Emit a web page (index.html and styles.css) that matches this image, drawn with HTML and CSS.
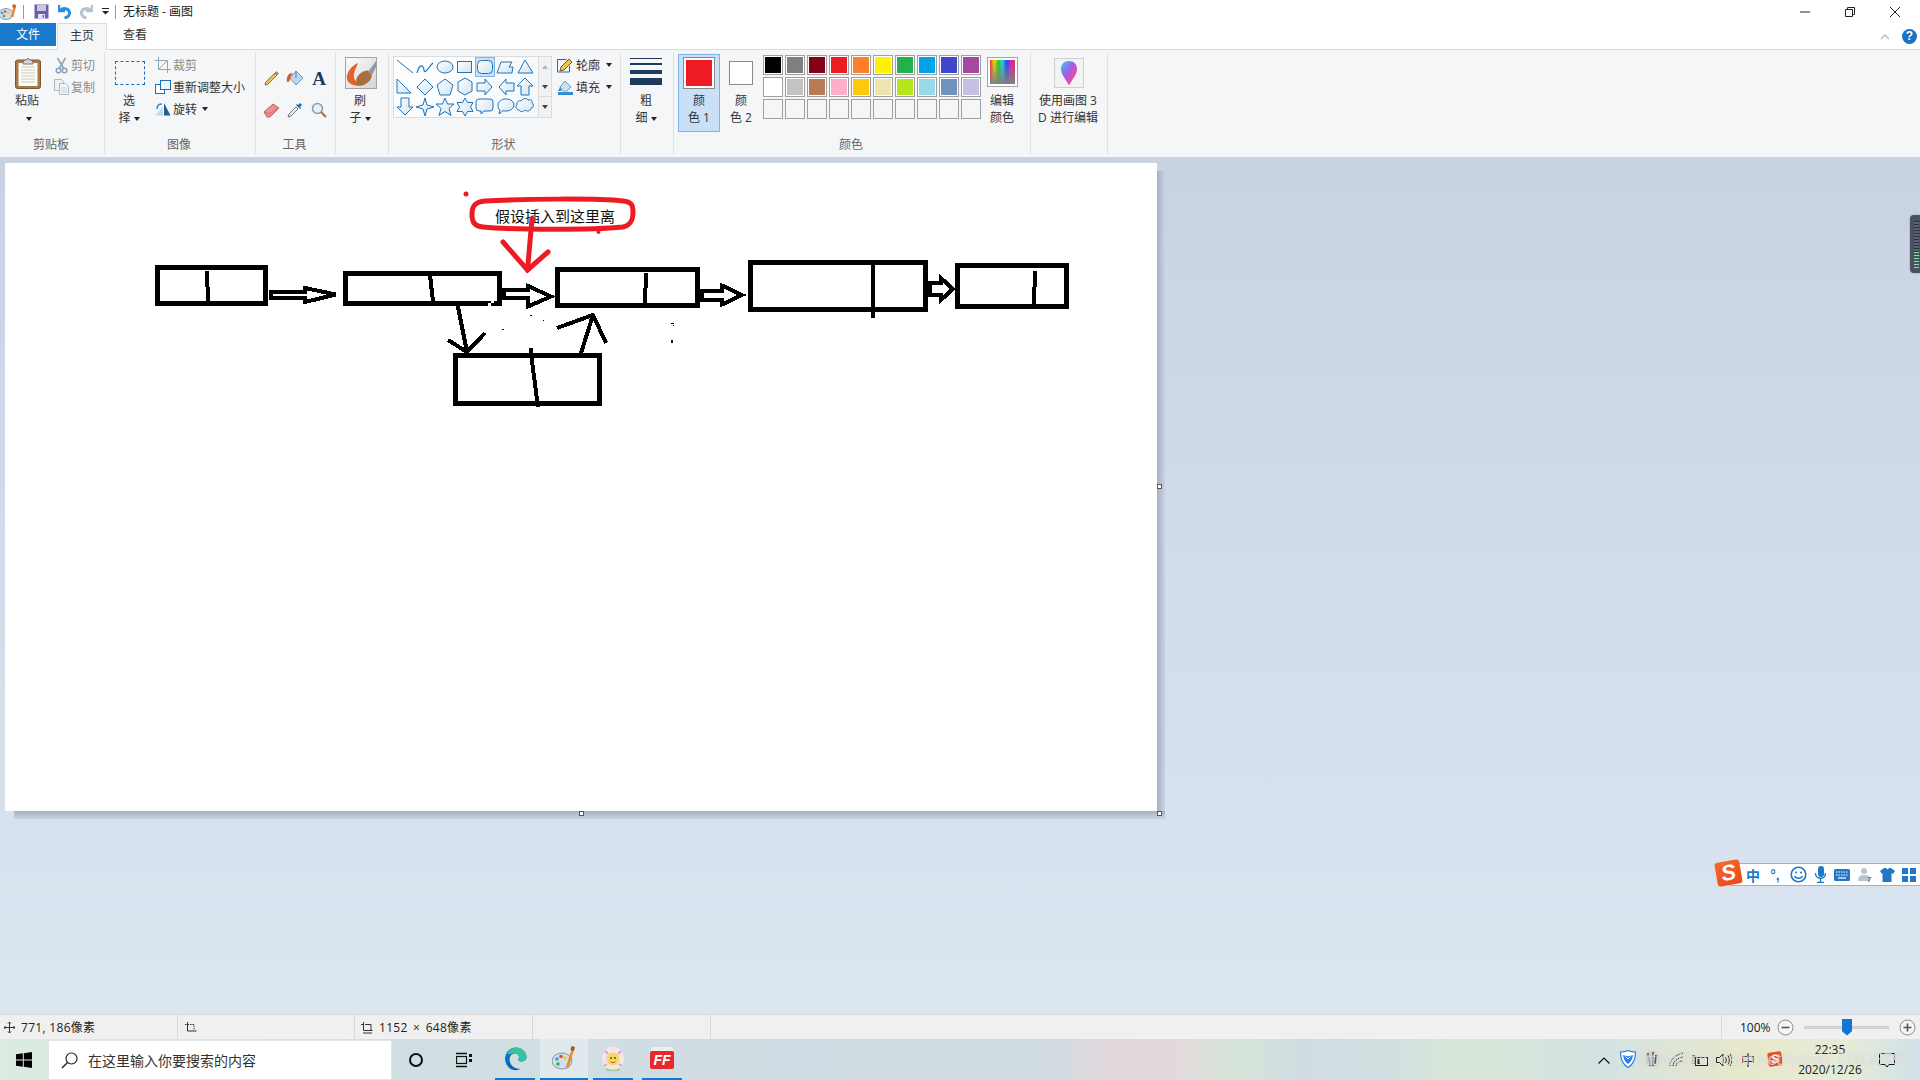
FILE: index.html
```html
<!DOCTYPE html>
<html lang="zh-CN">
<head>
	<meta charset="UTF-8">
	<title>无标题 - 画图</title>
	<link rel="stylesheet" href="styles.css">
</head>
<body>
<div class="app">

	<!-- 标题栏 -->
	<header class="titlebar">
		<svg class="qa qa-app" width="17" height="18" viewBox="0 0 17 18"><ellipse cx="6" cy="11" rx="7" ry="5.5" fill="#cfe0ea" stroke="#7d9cb5"/><circle cx="2" cy="10" r="1.3" fill="#3a9be0"/><circle cx="5" cy="8.5" r="1.3" fill="#e04a3a"/><circle cx="8" cy="9.5" r="1.3" fill="#f2c230"/><circle cx="4" cy="13" r="1.3" fill="#49a84a"/><path d="M15 3l-3 11" stroke="#e8892b" stroke-width="2.5"/><path d="M13 1l3 1-1 3-3-1z" fill="#b5682a"/></svg>
		<i class="qa-sep"></i>
		<svg class="qa qa-save" width="15" height="15" viewBox="0 0 15 15"><path d="M0.5 0.5h14v14h-14z" fill="#6a5ea8"/><path d="M3 1h9v6H3z" fill="#c9c6e2"/><path d="M4 10h7v4.5H4z" fill="#e3e2ef"/><path d="M8.500 11h1.500v2.500H8.500z" fill="#6a5ea8"/></svg>
		<svg class="qa qa-undo" width="14" height="15" viewBox="0 0 14 15"><path d="M1 1v6h6" fill="none" stroke="#2a8fd8" stroke-width="2.500"/><path d="M2 6.500c3-3 9-2.500 9.500 2 .3 3-2 5-5 5.500" fill="none" stroke="#2a8fd8" stroke-width="3"/></svg>
		<svg class="qa qa-redo" width="14" height="15" viewBox="0 0 14 15"><path d="M13 1v6H7" fill="none" stroke="#b4c4d2" stroke-width="2.500"/><path d="M12 6.500c-3-3-9-2.500-9.500 2-.3 3 2 5 5 5.500" fill="none" stroke="#b4c4d2" stroke-width="3"/></svg>
		<svg class="qa qa-more" width="7" height="7" viewBox="0 0 7 7"><path d="M0 0h7v1H0zM0 3h7L3.500 6.500z" fill="#222"/></svg>
		<i class="qa-sep qa-sep2"></i>
		<span class="title-text">无标题 - 画图</span>
		<div class="winbtns">
			<svg width="12" height="12" viewBox="0 0 12 12"><path d="M1 6h10" stroke="#222"/></svg>
			<svg width="12" height="12" viewBox="0 0 12 12"><path d="M1.500 3.500h7v7h-7zM3.500 3.500v-2h7v7h-2" fill="none" stroke="#222"/></svg>
			<svg width="12" height="12" viewBox="0 0 12 12"><path d="M1 1l10 10M11 1L1 11" stroke="#222"/></svg>
		</div>
	</header>

	<!-- 选项卡 -->
	<nav class="tabs">
		<div class="tab tab-file">文件</div>
		<div class="tab tab-home">主页</div>
		<div class="tab tab-view">查看</div>
		<div class="tabs-right">
			<svg width="10" height="7" viewBox="0 0 10 7"><path d="M1 6l4-4 4 4" fill="none" stroke="#b9b9b9" stroke-width="1.300"/></svg>
			<span class="help">?</span>
		</div>
	</nav>

	<!-- 功能区 -->
	<section class="ribbon">
		<div class="group g-clip">
			<div class="group-body">
				<div class="big paste-btn">
					<div class="big-icon">
						<svg width="26" height="32" viewBox="0 0 26 32"><rect x="0.500" y="3" width="25" height="28.500" rx="2" fill="#a9794a" stroke="#7c5730"/><rect x="3.500" y="6" width="19" height="23" fill="#fdfdf8"/><path d="M6 10h14M6 13h14M6 16h14M6 19h14M6 22h14M6 25h14" stroke="#c9c9b8"/><path d="M8 5l2-2h1.500l1.500-2 1.500 2H16l2 2v2H8z" fill="#d5d5d5" stroke="#777"/></svg>
					</div>
					<div class="big-text">粘贴</div>
					<div class="big-text"><i class="caret"></i></div>
				</div>
				<div class="smalls">
					<div class="small off"><svg width="12" height="17" viewBox="0 0 12 17"><path d="M2 1l6 10M10 1L4 11" stroke="#8aa0b4" stroke-width="1.500"/><circle cx="3" cy="13.500" r="2.300" fill="none" stroke="#8aa0b4" stroke-width="1.500"/><circle cx="9" cy="13.500" r="2.300" fill="none" stroke="#8aa0b4" stroke-width="1.500"/></svg><span>剪切</span></div>
					<div class="small off"><svg width="15" height="16" viewBox="0 0 15 16"><path d="M.5.500h7l2 2v9h-9z" fill="#eef2f6" stroke="#a9b8c6"/><path d="M5.500 4.500h6l3 3v8h-9z" fill="#f6f8fa" stroke="#a9b8c6"/><path d="M7 9h6M7 11h6M7 13h6" stroke="#c3ced8"/></svg><span>复制</span></div>
				</div>
			</div>
			<div class="group-label">剪贴板</div>
		</div>

		<div class="group g-image">
			<div class="group-body">
				<div class="big select-btn">
					<div class="big-icon"><div class="select-mark"></div></div>
					<div class="big-text">选</div>
					<div class="big-text">择<i class="caret"></i></div>
				</div>
				<div class="smalls">
					<div class="small off"><svg width="16" height="16" viewBox="0 0 16 16"><path d="M3.500 0v12.500H16M0 3.500h12.500V16" fill="none" stroke="#8fa4b8"/><path d="M4 12L12 4" stroke="#8fa4b8"/></svg><span>裁剪</span></div>
					<div class="small"><svg width="16" height="14" viewBox="0 0 16 14"><rect x="0.500" y="4.500" width="9" height="9" fill="#fff" stroke="#1f6db5"/><rect x="5.500" y="0.500" width="10" height="9" fill="#eef5fb" stroke="#1f6db5"/></svg><span>重新调整大小</span></div>
					<div class="small"><svg width="16" height="14" viewBox="0 0 16 14"><path d="M0 13.500L8 5v8.500z" fill="#c9d6e1"/><path d="M9 13.500V1l6.500 12.500z" fill="#1f5f96"/><path d="M2 7c0-4 2-5 5-5" fill="none" stroke="#2a8fd8" stroke-width="1.500"/></svg><span>旋转</span><i class="caret caret-r"></i></div>
				</div>
			</div>
			<div class="group-label">图像</div>
		</div>

		<div class="group g-tools">
			<div class="group-body tools-grid">
				<svg width="15" height="15" viewBox="0 0 15 15"><path d="M1 14l.8-3L11 2l2 2-9 9.200z" fill="#f3c24e" stroke="#5d5a4a" stroke-width=".8"/><path d="M11 2l1.500-1.500 2 2L13 4z" fill="#c9a06a" stroke="#5d5a4a" stroke-width=".6"/></svg>
				<svg width="18" height="17" viewBox="0 0 18 17"><path d="M10 1l7 7-7 7-6-7z" fill="#bcd8ee" stroke="#6d97bb"/><path d="M10 1v7" stroke="#4d7ea8"/><path d="M5 3c-3 1-5 5-4 9 2 0 3-1 3-3 0-2 1-4 3-5z" fill="#e2572b"/></svg>
				<span class="tool-a">A</span>
				<svg width="17" height="15" viewBox="0 0 17 15"><path d="M1 9l9-8 6 4-9 9H4z" fill="#f0908c" stroke="#b8605c"/><path d="M1 9l5 2 10-6" fill="none" stroke="#c9706c"/></svg>
				<svg width="16" height="16" viewBox="0 0 16 16"><path d="M1 15l1-3 7-7 2 2-7 7z" fill="#e8eef3" stroke="#6a7a88"/><path d="M9 3l4 4 1-1-1-1 2-2-2-2-2 2-1-1z" fill="#1f6db5"/></svg>
				<svg width="16" height="16" viewBox="0 0 16 16"><circle cx="6.500" cy="6.500" r="5" fill="#e6f0f8" stroke="#8a9aa8" stroke-width="1.500"/><path d="M10 10l5 5" stroke="#9a7a50" stroke-width="2.200"/></svg>
			</div>
			<div class="group-label">工具</div>
		</div>

		<div class="group g-brush">
			<div class="group-body">
				<div class="big brush-btn">
					<div class="big-icon">
						<svg class="brush-box" width="32" height="32" viewBox="0 0 32 32"><defs><linearGradient id="bb" x1="0" y1="0" x2="1" y2="1"><stop offset="0" stop-color="#fbfbfb"/><stop offset="1" stop-color="#d4d4d4"/></linearGradient></defs><rect x="0.500" y="0.500" width="31" height="31" fill="url(#bb)" stroke="#a3a3a3"/><path d="M13 6C6 9 1 16 2 22c1 6 10 8 18 6-8-1-12-5-11-11 1-5 3-8 4-11z" fill="#e4622a"/><ellipse cx="19" cy="21" rx="9" ry="6" transform="rotate(-40 19 21)" fill="#a5703e"/><path d="M23 15L31 4v6l-4 8z" fill="#8d99a6"/></svg>
					</div>
					<div class="big-text">刷</div>
					<div class="big-text">子<i class="caret"></i></div>
				</div>
			</div>
			<div class="group-label"></div>
		</div>

		<div class="group g-shapes">
			<div class="group-body">
				<div class="gallery">
					<svg class="gallery-svg" width="144" height="60" viewBox="0 0 144 60">
						<defs><linearGradient id="sf" x1="0" y1="0" x2="1" y2="1"><stop offset="0" stop-color="#ffffff"/><stop offset="1" stop-color="#cfe4f3"/></linearGradient></defs>
						<rect x="81.500" y="0.500" width="19" height="19" fill="#c9e0f7" stroke="#7eb4ea"/>
						<g fill="url(#sf)" stroke="#2272b5" stroke-width="1">
							<path d="M3 3l16 13" fill="none"/>
							<path d="M23 16c1-5 4-9 6-6s0 6 3 4 4-6 7-8" fill="none" stroke-width="1.200"/>
							<ellipse cx="51" cy="10" rx="8" ry="6"/>
							<rect x="63.500" y="4.500" width="14" height="11"/>
							<rect x="83.500" y="3.500" width="15" height="13" rx="4"/>
							<path d="M103 16l4-11h11l-3 5h4l-1 6z"/>
							<path d="M131 3l8 13h-15z"/>

							<path d="M3 22l14 14H3z"/>
							<path d="M31 22l8 8-8 8-8-8z"/>
							<path d="M51 22l8 6-3 10H46l-3-10z"/>
							<path d="M71 21l7 4v9l-7 4-7-4v-9z"/>
							<path d="M83 26h8v-4l7 8-7 8v-4h-8z"/>
							<path d="M120 26h-8v-4l-7 8 7 8v-4h8z"/>
							<path d="M131 21l8 8h-4v9h-8v-9h-4z"/>

							<path d="M7 41h8v9h4l-8 8-8-8h4z"/>
							<path d="M31 41l2 7 7 2-7 2-2 7-2-7-7-2 7-2z"/>
							<path d="M51 41l2.500 6h6.500l-5 4.500 2 7-6-4-6 4 2-7-5-4.500h6.500z"/>
							<path d="M71 41l2.500 4.500h5.500l-2.500 4.500 2.500 4.500h-5.500L71 59l-2.500-4.500H63l2.500-4.500-2.500-4.500h5.500z"/>
							<path d="M86 43h11a3 3 0 0 1 3 3v6a3 3 0 0 1-3 3h-6l-3 3v-3h-2a3 3 0 0 1-3-3v-6a3 3 0 0 1 3-3z" transform="translate(-1 -1)"/>
							<path d="M112 42c5 0 8 3 8 6s-3 6-8 6c-1 0-2 0-3-.3L105 57l1-4c-2-1-2-3-2-5 0-3 3-6 8-6z"/>
							<path d="M127 44c2-3 6-3 7-1 3-1 5 1 4 3 2 1 2 5-1 5 0 3-4 4-6 2-2 2-5 2-6 0-3 0-4-4-2-5-1-3 2-5 4-4z"/>
						</g>
					</svg>
					<div class="gallery-scroll">
						<i class="gs gs-up"></i>
						<i class="gs gs-down"></i>
						<i class="gs gs-more"></i>
					</div>
				</div>
				<div class="smalls shape-opts">
					<div class="small"><svg width="16" height="15" viewBox="0 0 16 15"><path d="M.5 1.500h9M.5 1.500v12.500h12V8" fill="none" stroke="#1f6db5"/><path d="M3 13l1-4 8-8 3 3-8 8z" fill="#f3c24e" stroke="#6b5a2a"/></svg><span>轮廓</span><i class="caret caret-r"></i></div>
					<div class="small"><svg width="16" height="15" viewBox="0 0 16 15"><path d="M1 12h15v3H1z" fill="#2a8fd8"/><path d="M8 1l6 6-6 5.500L3 7z" fill="#cfe0ee" stroke="#6d97bb"/><path d="M3 7L1 11h4z" fill="#2a8fd8"/></svg><span>填充</span><i class="caret caret-r"></i></div>
				</div>
			</div>
			<div class="group-label">形状</div>
		</div>

		<div class="group g-size">
			<div class="group-body">
				<div class="big size-btn">
					<div class="big-icon">
						<svg width="32" height="28" viewBox="0 0 32 28"><g fill="#1e3a5c"><rect y="1" width="32" height="1"/><rect y="6" width="32" height="2"/><rect y="13" width="32" height="4"/><rect y="21" width="32" height="7"/></g></svg>
					</div>
					<div class="big-text">粗</div>
					<div class="big-text">细<i class="caret"></i></div>
				</div>
			</div>
			<div class="group-label"></div>
		</div>

		<div class="group g-colors">
			<div class="group-body">
				<div class="big color-btn active">
					<div class="color-swatch big-swatch"><b></b></div>
					<div class="big-text">颜</div>
					<div class="big-text">色 1</div>
				</div>
				<div class="big color-btn second">
					<div class="color-swatch small-swatch"></div>
					<div class="big-text">颜</div>
					<div class="big-text">色 2</div>
				</div>
				<div class="palette">
					<i style="background:#000000"></i><i style="background:#7f7f7f"></i><i style="background:#880015"></i><i style="background:#ed1c24"></i><i style="background:#ff7f27"></i><i style="background:#fff200"></i><i style="background:#22b14c"></i><i style="background:#00a2e8"></i><i style="background:#3f48cc"></i><i style="background:#a349a4"></i>
					<i style="background:#ffffff"></i><i style="background:#c3c3c3"></i><i style="background:#b97a57"></i><i style="background:#ffaec9"></i><i style="background:#ffc90e"></i><i style="background:#efe4b0"></i><i style="background:#b5e61d"></i><i style="background:#99d9ea"></i><i style="background:#7092be"></i><i style="background:#c8bfe7"></i>
					<i></i><i></i><i></i><i></i><i></i><i></i><i></i><i></i><i></i><i></i>
				</div>
				<div class="big edit-btn">
					<div class="big-icon"><div class="rainbow"></div></div>
					<div class="big-text">编辑</div>
					<div class="big-text">颜色</div>
				</div>
			</div>
			<div class="group-label label-colors">颜色</div>
		</div>

		<div class="group g-3d">
			<div class="group-body">
				<div class="big p3d-btn">
					<div class="big-icon">
						<div class="p3d-box">
							<svg width="18" height="26" viewBox="0 0 18 26"><defs><linearGradient id="drop" x1="0" y1="0" x2="1" y2="1"><stop offset="0" stop-color="#2fd0f0"/><stop offset=".45" stop-color="#a65be8"/><stop offset=".8" stop-color="#f0508a"/><stop offset="1" stop-color="#f5a13a"/></linearGradient></defs><path d="M9 1c5 0 8 3.500 8 8 0 6-5 10-7 15-.5 1-1.500 1-2 0C6 19 1 15 1 9c0-4.500 3-8 8-8z" fill="url(#drop)"/></svg>
						</div>
					</div>
					<div class="big-text">使用画图 3</div>
					<div class="big-text">D 进行编辑</div>
				</div>
			</div>
			<div class="group-label"></div>
		</div>
	</section>

	<!-- 画布区域 -->
	<main class="work">
		<div class="canvas">
			<svg class="drawing" width="1152" height="648" viewBox="5 163 1152 648">
				<g fill="none" stroke="#000" stroke-width="5" shape-rendering="crispEdges">
					<rect x="157.500" y="267.500" width="108" height="36"/>
					<path d="M207 271l1 31" stroke-width="4"/>
					<rect x="345.500" y="273.500" width="154" height="30"/>
					<path d="M430 275l3.500 31" stroke-width="4"/>
					<rect x="557.500" y="269.500" width="140" height="36"/>
					<path d="M646 273l-1 30" stroke-width="4"/>
					<rect x="750.500" y="262.500" width="175" height="47"/>
					<path d="M872.500 265v53" stroke-width="4"/>
					<rect x="957.500" y="265.500" width="109" height="41"/>
					<path d="M1035 271l-1 33" stroke-width="4"/>
					<rect x="455.500" y="355.500" width="144" height="48"/>
					<path d="M531 348l1 13 6 46" stroke-width="4"/>
					<g fill="#fff" stroke-width="4">
						<path d="M271 292h34v-4l31 6.500-31 7.500v-4.500h-34z"/>
						<path d="M504 289.500h24v-3.500l23 10.500-23 10v-8.500h-24z"/>
						<path d="M702 290.500h20v-5l20 9.500-20 9.500v-5h-20z"/>
						<path d="M930 283h11v-5l12 11-12 11v-5.500h-11z"/>
					</g>
					<path d="M457 302l10 50M448 340l19 12 18-19" stroke-width="4"/>
					<path d="M581 353l12-38M557 328l36-13 13 28" stroke-width="4"/>
				</g>
				<g fill="#fff">
					<rect x="488" y="303" width="3" height="3"/>
					<rect x="491" y="301" width="3" height="2"/>
				</g>
				<g fill="#000">
					<rect x="530" y="315" width="2" height="1"/>
					<rect x="502" y="329" width="2" height="1"/>
					<rect x="543" y="320" width="1" height="1"/>
					<rect x="671" y="323" width="3" height="1"/>
					<rect x="673" y="325" width="1" height="1"/>
					<rect x="671" y="340" width="2" height="3"/>
				</g>
				<text class="note" x="495" y="222">假设插入到这里离</text>
				<g fill="none" stroke="#ed1c24" stroke-width="5" stroke-linecap="round">
					<path d="M485 201c40-2 110-3 138 0 8 1 10 3 10 11 0 8-2 13-10 15-30 3-110 3-140 0-9-1-11-5-11-13 0-8 3-12 13-13z"/>
					<path d="M532 219l-4.500 51"/>
					<path d="M503 242l24.500 28 20.500-18"/>
				</g>
				<circle cx="466" cy="194" r="2.500" fill="#ed1c24"/>
				<circle cx="598.500" cy="232" r="2" fill="#ed1c24"/>
			</svg>
			<span class="handle h-right"></span>
			<span class="handle h-bottom"></span>
			<span class="handle h-corner"></span>
		</div>

		<div class="meter"></div>

		<!-- 输入法状态条 -->
		<div class="imebar">
			<span class="ime-logo">S</span>
			<span class="ime-item ime-zh">中</span>
			<span class="ime-item ime-punc">°,</span>
			<svg class="ime-item" width="17" height="17" viewBox="0 0 17 17"><circle cx="8.500" cy="8.500" r="7.300" fill="none" stroke="#1f78c8" stroke-width="1.600"/><circle cx="6" cy="6.500" r="1" fill="#1f78c8"/><circle cx="11" cy="6.500" r="1" fill="#1f78c8"/><path d="M4.500 10c1 3 7 3 8 0" fill="none" stroke="#1f78c8" stroke-width="1.300"/></svg>
			<svg class="ime-item" width="13" height="17" viewBox="0 0 13 17"><rect x="4" y="0" width="6" height="11" rx="3" fill="#1f78c8"/><path d="M1.500 7c0 7 10 7 10 0M6.500 12v4M3 16.500h7" fill="none" stroke="#1f78c8" stroke-width="1.400"/></svg>
			<svg class="ime-item" width="16" height="12" viewBox="0 0 16 12"><rect width="16" height="12" rx="1.500" fill="#1f78c8"/><path d="M2 3h12M2 6h12" stroke="#fff" stroke-dasharray="1.500 1"/><path d="M4 9h8" stroke="#fff" stroke-width="1.200"/></svg>
			<svg class="ime-item" width="16" height="16" viewBox="0 0 16 16"><circle cx="7" cy="4" r="3" fill="#b9c4cf"/><path d="M1 14c0-5 3-6 6-6s5 1 6 3v3z" fill="#b9c4cf"/><text x="10" y="15" class="ime-seven">7</text></svg>
			<svg class="ime-item" width="15" height="14" viewBox="0 0 15 14"><path d="M4 0h2c.5 1.500 2.500 1.500 3 0h2l4 3-2 3-1.500-1v9h-9V5L2 6 0 3z" fill="#1f78c8"/></svg>
			<svg class="ime-item" width="14" height="14" viewBox="0 0 14 14"><path d="M0 0h6v6H0zM8 0h6v6H8zM0 8h6v6H0zM8 8h6v6H8z" fill="#1f78c8"/></svg>
		</div>
	</main>

	<!-- 状态栏 -->
	<footer class="statusbar">
		<div class="st st-pos"><svg width="11" height="11" viewBox="0 0 11 11"><path d="M5.500 0v11M0 5.500h11M4 1.500l1.500-1.500L7 1.500M4 9.500L5.500 11 7 9.500M1.500 4L0 5.500 1.500 7M9.500 4L11 5.500 9.500 7" fill="none" stroke="#333"/></svg><span>771, 186像素</span></div>
		<div class="st st-sel"><svg width="13" height="13" viewBox="0 0 13 13"><path d="M3.500 1v9h9" fill="none" stroke="#333"/><path d="M1 3.500h9v6" fill="none" stroke="#333" stroke-dasharray="1.500 1"/></svg></div>
		<div class="st st-size"><svg width="13" height="13" viewBox="0 0 13 13"><path d="M3.500 1v8.500h9M1 3.500h2.500M11 3.500H5" fill="none" stroke="#333"/><path d="M11 3.500v6" stroke="#333"/><path d="M3 12h9" stroke="#333"/></svg><span class="st-dim">1152 × 648像素</span></div>
		<div class="st st-blank"></div>
		<div class="st st-fill"></div>
		<div class="zoom">
			<span class="zoom-val">100%</span>
			<svg width="17" height="17" viewBox="0 0 17 17"><circle cx="8.500" cy="8.500" r="7.500" fill="#f5f5f5" stroke="#8a8a8a"/><path d="M4.500 8.500h8" stroke="#555" stroke-width="1.600"/></svg>
			<div class="zoom-track"><i class="zoom-thumb"></i></div>
			<svg width="17" height="17" viewBox="0 0 17 17"><circle cx="8.500" cy="8.500" r="7.500" fill="#f5f5f5" stroke="#8a8a8a"/><path d="M4.500 8.500h8M8.500 4.500v8" stroke="#555" stroke-width="1.600"/></svg>
		</div>
	</footer>

	<!-- 任务栏 -->
	<div class="taskbar">
		<div class="start"><svg width="16" height="16" viewBox="0 0 16 16"><path d="M0 2.300L6.800 1.300v6.200H0zM7.800 1.200L16 0v7.500H7.800zM0 8.500h6.800v6.200L0 13.700zM7.800 8.500H16V16l-8.200-1.200z" fill="#000"/></svg></div>
		<div class="searchbox">
			<svg width="17" height="17" viewBox="0 0 17 17"><circle cx="10.500" cy="6.500" r="5.500" fill="none" stroke="#222" stroke-width="1.200"/><path d="M6.500 10.500l-5.500 5.500" stroke="#222" stroke-width="1.400"/></svg>
			<span>在这里输入你要搜索的内容</span>
		</div>
		<div class="tb-btn tb-cortana"><i class="cortana"></i></div>
		<div class="tb-btn tb-view"><svg width="16" height="16" viewBox="0 0 16 16"><path d="M0 1.500h11M0 14.500h11" stroke="#111" stroke-width="1.300"/><rect x="0.500" y="4.500" width="10" height="7" fill="none" stroke="#111" stroke-width="1.200"/><rect x="13" y="2" width="3" height="3" fill="#111"/><rect x="13" y="7" width="3" height="3" fill="#111"/></svg></div>
		<div class="tb-app tb-edge"><svg width="23" height="24" viewBox="0 0 23 24"><defs><linearGradient id="edgeb" x1="0" y1="0" x2="1" y2="1"><stop offset="0" stop-color="#0d7fd0"/><stop offset="1" stop-color="#0a4fa0"/></linearGradient></defs><path d="M1 12C1 5 6 .5 12 .5c6 0 10.500 4.500 10.500 9.500 0 3-2.500 4.500-5 4.500-2 0-3.500-.8-3.500-2 2-2 1-6-3-6-5 0-7 6-4 11 2 3 6 5 10 4-3 2-6 2-9 1-4-1.500-7-6-7-11z" fill="url(#edgeb)"/><path d="M3 7c2-4 6-6.500 9-6.500 6 0 10.500 4.500 10.500 9.500 0 3-2.500 4.500-5 4.500-2 0-3.500-.8-3.500-2 2-2 1-6-3-6-3 0-6 1-8 .5z" fill="#36c3a0"/></svg></div>
		<div class="tb-app tb-paint"><svg width="24" height="25" viewBox="0 0 24 25"><ellipse cx="10" cy="15" rx="10" ry="8" fill="#cfe0ea" stroke="#7d9cb5"/><circle cx="5" cy="13" r="1.800" fill="#3a9be0"/><circle cx="9" cy="10.500" r="1.800" fill="#e04a3a"/><circle cx="13" cy="12" r="1.800" fill="#f2c230"/><circle cx="6" cy="18" r="1.800" fill="#49a84a"/><path d="M21 3l-6 19" stroke="#e8892b" stroke-width="2.500"/><path d="M19.500 0l3.500 1-1 4-3.500-1z" fill="#9a5a2a"/></svg></div>
		<div class="tb-app tb-sun"><svg width="24" height="26" viewBox="0 0 24 26"><ellipse cx="12" cy="13" rx="11" ry="12.500" fill="#f3e6e8"/><path d="M4 5l3 3M20 5l-3 3M3 20l3-2M21 20l-3-2" stroke="#d8a8b8" stroke-width="2"/><circle cx="12" cy="13" r="6.500" fill="#f6d860"/><circle cx="10" cy="12" r=".9" fill="#444"/><circle cx="14" cy="12" r=".9" fill="#444"/><path d="M9.500 15.500c1.500 1.500 3.500 1.500 5 0" fill="none" stroke="#c06040"/><path d="M5 23c4 2 10 2 14 0" stroke="#9ccf9c" stroke-width="2" fill="none"/></svg></div>
		<div class="tb-app tb-ff"><span class="ff-top"></span><span class="ff-logo">FF</span></div>
		<div class="tray">
			<svg class="t-chev" width="12" height="7" viewBox="0 0 12 7"><path d="M.5 6.500L6 1l5.500 5.500" fill="none" stroke="#111" stroke-width="1.200"/></svg>
			<svg class="t-shield" width="16" height="18" viewBox="0 0 16 18"><path d="M8 .500c2 1 5 1.500 7.500 1.500 0 7-1.500 12-7.500 15.500C2 14 .5 9 .5 2 3 2 6 1.500 8 .5z" fill="#fff" stroke="#2a7fe8" stroke-width="1.200"/><path d="M3 5c3 1.500 7 1.500 10 0-.5 4-2 7-5 9-3-2-4.500-5-5-9z" fill="#2a7fe8"/><path d="M5.500 6.500L8 9l2.500-2.500" fill="none" stroke="#fff"/></svg>
			<svg class="t-avatar" width="16" height="18" viewBox="0 0 16 18"><ellipse cx="8" cy="9" rx="7.500" ry="8.500" fill="#d8d0c4"/><path d="M4 3l2 13M9 2v14M12 5l-1 9" stroke="#5c5648" stroke-width="1.600"/></svg>
			<svg class="t-wifi" width="16" height="15" viewBox="0 0 16 15"><path d="M1 14c0-6 5-11 13-13M4 14c0-4 4-8 10-9M7 14c0-2 2-5 7-5" fill="none" stroke="#222" stroke-dasharray="1.500 .8"/></svg>
			<svg class="t-batt" width="16" height="13" viewBox="0 0 16 13"><rect x="3.500" y="3.500" width="12" height="8" fill="none" stroke="#222"/><path d="M0 1v9M2 1v9" stroke="#222" stroke-dasharray="1.500 1"/><rect x="5" y="5" width="3" height="5" fill="#222"/></svg>
			<svg class="t-vol" width="16" height="14" viewBox="0 0 16 14"><path d="M.5 4.500h3L7 1v12L3.500 9.500h-3z" fill="none" stroke="#222"/><path d="M9.500 4c1 2 1 4 0 6M12 2.500c1.800 3 1.800 6 0 9M14 1c2.500 4 2.500 8 0 12" fill="none" stroke="#222"/></svg>
			<span class="t-lang">中</span>
			<span class="t-logo">S</span>
			<div class="t-clock"><span>22:35</span><span>2020/12/26</span></div>
			<svg class="t-note" width="16" height="15" viewBox="0 0 16 15"><path d="M.5.500h15v11H10L8 14l-2-2.500H.5z" fill="none" stroke="#111"/></svg>
		</div>
		<span class="watermark">https://blog.csdn.net/weixin_50635790</span>
	</div>
</div>
</body>
</html>
```

FILE: styles.css
```css
html,body{
	margin:0;
	padding:0;
}
body{
	font-family:"Open Sans","Noto Sans CJK SC",sans-serif;
	font-size:12px;
	color:#333;
	background:#fff;
}
.app{
	width:1920px;
	height:1080px;
	overflow:hidden;
	display:flex;
	flex-direction:column;
}
svg{
	display:block;
	flex:none;
}

/* title bar */
.titlebar{
	height:23px;
	display:flex;
	align-items:center;
	flex:none;
	background:#fff;
}
.qa-sep{
	width:1px;
	height:14px;
	background:#9a9a9a;
	margin:0 0 0 6px;
}
.qa-save{
	margin-left:10px;
}
.qa-undo{
	margin-left:9px;
}
.qa-redo{
	margin-left:7px;
}
.qa-more{
	margin-left:9px;
}
.qa-sep2{
	margin-left:6px;
}
.title-text{
	margin-left:7px;
	color:#222;
	line-height:23px;
}
.winbtns{
	margin-left:auto;
	display:flex;
	gap:33px;
	margin-right:19px;
}

/* tabs */
.tabs{
	height:27px;
	display:flex;
	flex:none;
	background:#fff;
	box-sizing:border-box;
	border-bottom:1px solid #dadbdc;
}
.tab{
	line-height:23px;
	text-align:center;
	color:#333;
}
.tab-file{
	width:56px;
	height:23px;
	background:#1979ca;
	color:#fff;
}
.tab-home{
	width:50px;
	height:27px;
	margin-left:1px;
	box-sizing:border-box;
	border:1px solid #dadbdc;
	border-bottom:none;
	background:#f5f6f7;
}
.tab-view{
	width:32px;
	margin-left:12px;
}
.tabs-right{
	margin-left:auto;
	display:flex;
	align-items:center;
	height:26px;
	gap:12px;
	padding-right:3px;
}
.help{
	width:15px;
	height:15px;
	border-radius:50%;
	background:#1a72c4;
	color:#fff;
	font:bold 12px/15px "Liberation Sans",sans-serif;
	text-align:center;
}

/* ribbon */
.ribbon{
	height:107px;
	flex:none;
	display:flex;
	background:#f5f6f7;
	box-sizing:border-box;
	padding:2px 0 3px;
}
.group{
	box-sizing:border-box;
	border-right:1px solid #e1e2e3;
	display:flex;
	flex-direction:column;
	flex:none;
}
.group-body{
	height:84px;
	display:flex;
}
.group-label{
	height:20px;
	line-height:22px;
	padding-right:2px;
	text-align:center;
	color:#666;
}
.g-clip{width:105px;}
.g-image{width:151px;}
.g-tools{width:80px;}
.g-brush{width:53px;}
.g-shapes{width:232px;}
.g-size{width:53px;}
.g-colors{width:357px;}
.g-3d{width:77px;}

.big{
	display:flex;
	flex-direction:column;
	align-items:center;
	flex:none;
	box-sizing:border-box;
}
.big-icon{
	height:40px;
	box-sizing:border-box;
	padding-top:5px;
	flex:none;
}
.big-text{
	line-height:17px;
	height:17px;
	white-space:nowrap;
	color:#333;
}
.caret{
	display:inline-block;
	width:0;
	height:0;
	border:3px solid transparent;
	border-top:4px solid #222;
	border-bottom:0;
	margin-left:3px;
	vertical-align:middle;
}
.caret-r{
	margin-left:3px;
}
.paste-btn{
	width:54px;
}
.paste-btn svg{
	margin-left:2px;
}
.smalls{
	display:flex;
	flex-direction:column;
	padding-top:2px;
}
.small{
	height:22px;
	display:flex;
	align-items:center;
	gap:3px;
	white-space:nowrap;
}
.small.off span{
	color:#8c8c8c;
}
.g-clip .small svg{
	width:15px;
}
.g-clip .small{
	gap:2px;
}
.g-image .small{
	gap:2px;
}
.select-btn{
	width:50px;
}
.select-btn .big-text{
	margin-right:2px;
}
.select-mark{
	width:30px;
	height:24px;
	box-sizing:border-box;
	border:1px dashed #1f6db5;
	margin-top:4px;
}
.tools-grid{
	display:grid;
	grid-template-columns:repeat(3,24px);
	grid-template-rows:repeat(2,32px);
	box-sizing:border-box;
	padding:10px 0 0 3px;
	align-items:center;
	justify-items:center;
}
.tool-a{
	font:bold 19px/19px "Liberation Serif",serif;
	color:#1e3a5c;
}
.brush-btn{
	width:50px;
}
.brush-btn .big-text{
	margin-right:2px;
}
.gallery{
	margin:5px 0 0 5px;
	width:157px;
	height:60px;
	display:flex;
	outline:1px solid #dadbdc;
	background:#fff;
	flex:none;
}
.gallery-svg{
	background:linear-gradient(135deg,#fff,#f4f8fb);
}
.gallery-scroll{
	width:13px;
	box-sizing:border-box;
	background:#f0f1f2;
	border-left:1px solid #dadbdc;
	display:flex;
	flex-direction:column;
}
.gs{
	height:20px;
	display:flex;
	align-items:center;
	justify-content:center;
}
.gs::before{
	content:'';
	border:3.500px solid transparent;
}
.gs-up::before{
	border-bottom:4px solid #b5b5b5;
	border-top:0;
}
.gs-down::before{
	border-top:4px solid #444;
	border-bottom:0;
}
.gs-more{
	border-top:1px solid #dadbdc;
}
.gs-more::before{
	border-top:4px solid #444;
	border-bottom:0;
	box-shadow:0 -3px 0 -2px #444;
}
.shape-opts{
	margin-left:6px;
}
.size-btn{
	width:50px;
}
.color-btn{
	width:42px;
	height:78px;
	margin:2px 0 0 4px;
	border:1px solid transparent;
}
.color-btn.active{
	background:#c9e0f7;
	border-color:#7eb4ea;
}
.color-btn.second{
	margin-left:2px;
	width:38px;
}
.color-swatch{
	flex:none;
	box-sizing:border-box;
	border:1px solid #8a8a8a;
	background:#fff;
}
.big-swatch{
	width:32px;
	height:32px;
	margin:2px 0 3px;
	padding:2px;
}
.big-swatch b{
	display:block;
	height:100%;
	background:#ed1c24;
}
.small-swatch{
	width:24px;
	height:24px;
	margin:6px 0 7px;
}
.palette{
	margin:3px 0 0 3px;
	display:grid;
	grid-template-columns:repeat(10,20px);
	grid-auto-rows:20px;
	gap:2px;
	align-content:start;
	flex:none;
}
.palette i{
	box-sizing:border-box;
	display:block;
	border:1px solid #a0a0a0;
	box-shadow:inset 0 0 0 1px #fff;
}
.palette i:nth-child(n+21){
	box-shadow:none;
}
.edit-btn{
	width:42px;
}
.rainbow{
	width:29px;
	height:28px;
	margin:1px 0 0 0;
	box-sizing:border-box;
	border:2px solid #fff;
	outline:1px solid #a5a5a5;
	background:linear-gradient(rgba(128,128,128,0),#808080 100%),linear-gradient(90deg,#ff2020,#ffe000,#20d020,#20d0e0,#2040f0,#d020d0,#ff2040);
}
.p3d-btn{
	width:74px;
}
.p3d-box{
	width:30px;
	height:30px;
	margin:1px 0 0 2px;
	box-sizing:border-box;
	border:1px solid #cfcfcf;
	background:#f3f3f3;
	display:flex;
	align-items:center;
	justify-content:center;
}

/* work area */
.work{
	flex:1;
	position:relative;
	box-sizing:border-box;
	padding:6px 0 0 5px;
	background:linear-gradient(#c8d2e3,#dce6f1);
	min-height:0;
}
.canvas{
	width:1152px;
	height:648px;
	background:#fff;
	position:relative;
}
.canvas::before{
	content:'';
	position:absolute;
	left:9px;
	top:100%;
	width:1151px;
	height:8px;
	background:linear-gradient(#a6b0c2,#c9d3e2);
}
.canvas::after{
	content:'';
	position:absolute;
	left:100%;
	top:8px;
	width:8px;
	height:640px;
	background:linear-gradient(90deg,#a6b0c2,#c9d3e2);
}
.drawing{
	position:relative;
	z-index:1;
}
.note{
	font:15px "Noto Sans CJK SC",sans-serif;
	fill:#111;
}
.handle{
	position:absolute;
	z-index:2;
	width:5px;
	height:5px;
	box-sizing:border-box;
	background:#fff;
	border:1px solid #555;
}
.h-right{
	left:1152px;
	top:321px;
}
.h-bottom{
	left:574px;
	top:648px;
}
.h-corner{
	left:1152px;
	top:648px;
}
.meter{
	position:absolute;
	right:0;
	top:58px;
	width:10px;
	height:58px;
	border-radius:4px 0 0 4px;
	background:#4a5162;
	box-shadow:0 0 2px #8a93a5;
}
.meter::before{
	content:'';
	position:absolute;
	left:4px;
	top:6px;
	width:5px;
	height:32px;
	background:repeating-linear-gradient(#2a2f3a 0 1px,#5c6474 1px 3px);
}
.meter::after{
	content:'';
	position:absolute;
	left:4px;
	top:37px;
	width:5px;
	height:16px;
	background:repeating-linear-gradient(#7fe8a0 0 1px,#4a5162 1px 3px);
}

/* ime toolbar */
.imebar{
	position:absolute;
	right:0;
	top:706px;
	width:190px;
	height:23px;
	box-sizing:border-box;
	background:#fff;
	border-top:1px solid #a7afbe;
	border-bottom:1px solid #a7afbe;
	display:flex;
	align-items:center;
	padding-left:16px;
	gap:7px;
}
.ime-logo{
	position:absolute;
	left:-14px;
	top:-3px;
	width:25px;
	height:24px;
	border-radius:3px;
	background:linear-gradient(160deg,#f8692a,#e8481c);
	color:#fff;
	font:italic bold 22px/24px "Liberation Sans",sans-serif;
	text-align:center;
	transform:rotate(-10deg);
}
.ime-item{
	flex:none;
}
.ime-zh{
	color:#1f78c8;
	font:bold 14px/18px "Noto Sans CJK SC",sans-serif;
}
.ime-punc{
	width:16px;
	color:#1f78c8;
	font:bold 14px/18px "Liberation Sans",sans-serif;
	text-align:center;
}
.ime-seven{
	font:bold 8px "Liberation Sans",sans-serif;
	fill:#777;
}

/* status bar */
.statusbar{
	height:25px;
	flex:none;
	display:flex;
	align-items:center;
	background:#f0f0f0;
	box-sizing:border-box;
	border-top:1px solid #d9d9d9;
	color:#222;
}
.st{
	box-sizing:border-box;
	height:24px;
	border-right:1px solid #d9d9d9;
	display:flex;
	align-items:center;
	flex:none;
	gap:6px;
	padding-left:4px;
	letter-spacing:.3px;
}
.st-pos{width:178px;}
.st-sel{width:177px;padding-left:6px;}
.st-size{width:178px;padding-left:5px;}
.st-dim{
	word-spacing:2px;
}
.st-blank{width:178px;}
.st-fill{width:1011px;}
.zoom{
	display:flex;
	align-items:center;
	flex:1;
	padding-left:18px;
}
.zoom-val{
	width:37px;
}
.zoom-track{
	width:85px;
	height:3px;
	margin:0 10px;
	background:#d8d8d8;
	border:1px solid #cfcfcf;
	box-sizing:border-box;
	position:relative;
}
.zoom-thumb{
	position:absolute;
	left:37px;
	top:-8px;
	width:10px;
	height:17px;
	background:#0f78d4;
	clip-path:polygon(0 0,100% 0,100% 75%,50% 100%,0 75%);
}

/* task bar */
.taskbar{
	height:41px;
	flex:none;
	display:flex;
	align-items:center;
	position:relative;
	background:linear-gradient(90deg,#dcebe0 0,#d1dfe2 400px,#d0dce3 800px,#d2dce2 1055px,#e2d8dc 1108px,#e3d9dc 1175px,#d6e4d8 1235px,#d1dde2 1300px,#d2e0e0 1395px,#d8e6d6 1460px,#d4e2e2 1600px,#e8e8ca 1750px,#e4ecd8 1850px,#d0e0ea 1920px);
}
.start{
	width:48px;
	display:flex;
	justify-content:center;
}
.searchbox{
	width:344px;
	height:40px;
	margin-top:1px;
	background:#fff;
	box-sizing:border-box;
	display:flex;
	align-items:center;
	padding-left:12px;
	gap:10px;
	font-size:14px;
	color:#333;
	border:1px solid #e4e4e4;
}
.searchbox span{
	font-family:"Noto Sans CJK SC",sans-serif;
}
.tb-btn{
	width:48px;
	display:flex;
	justify-content:center;
}
.cortana{
	width:10px;
	height:10px;
	border:2.500px solid #111;
	border-radius:50%;
}
.tb-app{
	height:41px;
	box-sizing:border-box;
	border-bottom:2px solid #0f78d4;
	display:flex;
	align-items:center;
	justify-content:center;
	flex:none;
	position:relative;
}
.tb-edge{
	width:40px;
	margin-left:7px;
}
.tb-paint{
	width:48px;
	margin-left:5px;
	background:rgba(255,255,255,.35);
}
.tb-sun{
	width:40px;
	margin-left:5px;
}
.tb-ff{
	width:40px;
	margin-left:9px;
}
.ff-logo{
	width:24px;
	height:18px;
	background:#e8282c;
	color:#fff;
	font:italic bold 14px/19px "Liberation Sans",sans-serif;
	text-align:center;
	border-radius:2px;
	margin-top:3px;
}
.ff-top{
	position:absolute;
	left:9px;
	top:8px;
	width:22px;
	height:4px;
	background:#eee;
	border-radius:2px 2px 0 0;
}
.tray{
	position:absolute;
	left:0;
	top:0;
	width:100%;
	height:41px;
	pointer-events:none;
}
.tray > *{
	position:absolute;
}
.t-chev{left:1598px;top:18px;}
.t-shield{left:1620px;top:11px;}
.t-avatar{left:1644px;top:11px;}
.t-wifi{left:1669px;top:13px;}
.t-batt{left:1692px;top:15px;}
.t-vol{left:1716px;top:14px;}
.t-lang{
	left:1741px;
	top:11px;
	font:14px/18px "Noto Sans CJK SC",sans-serif;
	color:#222;
}
.t-logo{
	left:1768px;
	top:13px;
	width:14px;
	height:14px;
	background:#ee4d20;
	color:#fff;
	border-radius:2px;
	font:italic bold 12px/14px "Liberation Sans",sans-serif;
	text-align:center;
	transform:rotate(-8deg);
}
.t-clock{
	left:1790px;
	top:1px;
	width:80px;
	text-align:center;
	color:#222;
	font-size:12px;
}
.t-clock span{
	display:block;
	line-height:20px;
}
.t-note{left:1879px;top:14px;}
.watermark{
	position:absolute;
	left:1638px;
	top:11px;
	font:16px/20px "Liberation Sans",sans-serif;
	color:rgba(255,255,255,.62);
	text-shadow:0 0 1px rgba(120,120,120,.4);
	white-space:nowrap;
}
```
